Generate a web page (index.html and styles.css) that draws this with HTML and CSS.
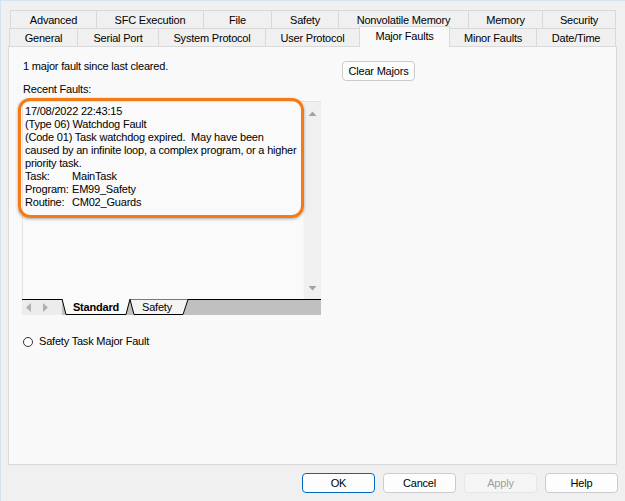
FILE: index.html
```html
<!DOCTYPE html>
<html>
<head>
<meta charset="utf-8">
<link rel="stylesheet" href="styles.css">
</head>
<body>
<div class="window">
  <div class="tabs">
    <div class="tabrow row1">
      <div class="tab w86">Advanced</div>
      <div class="tab w107">SFC Execution</div>
      <div class="tab w68">File</div>
      <div class="tab w67">Safety</div>
      <div class="tab w130">Nonvolatile Memory</div>
      <div class="tab w74">Memory</div>
      <div class="tab w74 last">Security</div>
    </div>
    <div class="tabrow row2">
      <div class="tab w68">General</div>
      <div class="tab w81">Serial Port</div>
      <div class="tab w107">System Protocol</div>
      <div class="tab w94">User Protocol</div>
      <div class="tab w91 sel">Major Faults</div>
      <div class="tab w86">Minor Faults</div>
      <div class="tab w80 last">Date/Time</div>
    </div>
  </div>
  <div class="panel">
    <div class="leftcol">
      <div class="line">1 major fault since last cleared.</div>
      <div class="line recent">Recent Faults:</div>
      <div class="faultbox">
        <div class="faulttext">
          <div class="fl">17/08/2022 22:43:15</div>
          <div class="fl">(Type 06) Watchdog Fault</div>
          <div class="fl">(Code 01) Task watchdog expired.  May have been</div>
          <div class="fl">caused by an infinite loop, a complex program, or a higher</div>
          <div class="fl">priority task.</div>
          <div class="fl"><span class="lbl">Task:</span>MainTask</div>
          <div class="fl"><span class="lbl">Program:</span>EM99_Safety</div>
          <div class="fl"><span class="lbl">Routine:</span>CM02_Guards</div>
        </div>
        <div class="vscroll">
          <svg width="17" height="14" viewBox="0 0 17 14"><path d="M4.5 10 L8.5 5.5 L12.5 10 Z" fill="#a3a3a3"/></svg>
          <svg width="17" height="14" viewBox="0 0 17 14"><path d="M4.5 4 L8.5 8.5 L12.5 4 Z" fill="#a3a3a3"/></svg>
        </div>
        <div class="highlight"></div>
      </div>
      <svg class="sheettabs" width="299" height="16" viewBox="0 0 299 16">
        <rect x="0" y="0" width="299" height="16" fill="#c0c0c0"/>
        <rect x="0" y="0" width="40" height="16" fill="#ececec"/>
        <line x1="0" y1="0.5" x2="299" y2="0.5" stroke="#000"/>
        <path d="M4 8.5 L9 4 L9 13 Z" fill="#b0b0b0"/>
        <path d="M21 4 L26 8.5 L21 13 Z" fill="#b0b0b0"/>
        <path d="M108 0.5 L112 15.5 L161 15.5 L166 0.5" fill="#f4f4f4" stroke="#000"/>
        <path d="M40 0 L44 15.5 L104 15.5 L108 0 Z" fill="#fafafa"/>
        <path d="M40 0 L44 15.5 L104 15.5 L108 0" fill="none" stroke="#000"/>
        <text x="74" y="12" text-anchor="middle" class="stab bold">Standard</text>
        <text x="135" y="12" text-anchor="middle" class="stab">Safety</text>
      </svg>
      <div class="radio"><span class="circle"></span><span>Safety Task Major Fault</span></div>
    </div>
    <div class="rightcol">
      <button class="btn clear">Clear Majors</button>
    </div>
  </div>
  <div class="buttons">
    <button class="btn dlg ok">OK</button>
    <button class="btn dlg">Cancel</button>
    <button class="btn dlg disabled">Apply</button>
    <button class="btn dlg">Help</button>
  </div>
</div>
</body>
</html>
```
FILE: styles.css
```css
html, body {
  margin: 0;
  padding: 0;
}
body {
  background: #f0f0f0;
  font-family: "Liberation Sans", Arial, sans-serif;
  font-size: 11px;
  letter-spacing: -0.2px;
  color: #000;
}
.window {
  width: 625px;
  height: 501px;
  box-sizing: border-box;
  box-shadow: inset 1px 1px 0 #d4e2f4;
  padding-top: 10px;
  overflow: hidden;
}
.tabrow {
  display: flex;
  height: 18px;
  align-items: flex-start;
}
.row1 { padding-left: 10px; }
.row2 { padding-left: 9px; }
.tab {
  box-sizing: border-box;
  height: 18px;
  border: 1px solid #d9d9d9;
  border-bottom: none;
  border-right: none;
  background: #f0f0f0;
  display: flex;
  align-items: center;
  justify-content: center;
  white-space: nowrap;
  line-height: 13px;
  padding-top: 1px;
}
.tab.last { border-right: 1px solid #d9d9d9; }
.tab.sel {
  height: 21px;
  margin-top: -2px;
  margin-bottom: -1px;
  background: #f9f9f9;
  border-right: 1px solid #d9d9d9;
  position: relative;
  z-index: 1;
  padding-top: 0;
  padding-bottom: 2px;
}
.tab.sel + .tab { border-left: none; }
.w67 { width: 67px; }
.w68 { width: 68px; }
.w74 { width: 74px; }
.w80 { width: 80px; }
.w81 { width: 81px; }
.w86 { width: 86px; }
.w91 { width: 91px; }
.w94 { width: 94px; }
.w107 { width: 107px; }
.w130 { width: 130px; }

.panel {
  box-sizing: border-box;
  margin: 0 8px 0 8px;
  height: 419px;
  border: 1px solid #d9d9d9;
  background: #f9f9f9;
  display: flex;
  align-items: flex-start;
  padding: 13px 0 0 14px;
}
.leftcol {
  display: flex;
  flex-direction: column;
  width: 298px;
}
.line {
  line-height: 13px;
  height: 13px;
  white-space: nowrap;
}
.recent { margin-top: 10px; }
.faultbox {
  position: relative;
  box-sizing: border-box;
  width: 299px;
  height: 198px;
  margin: 5px 0 0 -1px;
  border-left: 1px solid #e2e2e2;
  border-top: 1px solid #e2e2e2;
  background: #fafafa;
  display: flex;
}
.faulttext {
  flex: 1;
  padding: 3px 0 0 2px;
}
.fl {
  line-height: 13px;
  height: 13px;
  white-space: pre;
}
.lbl {
  display: inline-block;
  width: 47px;
}
.vscroll {
  width: 17px;
  background: #f0f0f0;
  border-left: 1px solid #f7f7f7;
  display: flex;
  flex-direction: column;
  justify-content: space-between;
  padding: 4px 0 3px 0;
}
.vscroll svg { display: block; }
.highlight {
  position: absolute;
  left: -5px;
  top: -4px;
  width: 286px;
  height: 120px;
  box-sizing: border-box;
  border: 3px solid #f57a14;
  border-radius: 12px;
  box-shadow: 0 1px 3px rgba(0,0,0,0.35);
  pointer-events: none;
}
.sheettabs {
  display: block;
  margin-left: -1px;
}
.stab {
  font-family: "Liberation Sans", Arial, sans-serif;
  font-size: 11px;
  fill: #000;
}
.stab.bold { font-weight: bold; }
.radio {
  margin-top: 20px;
  display: flex;
  align-items: center;
  line-height: 13px;
  height: 13px;
}
.circle {
  box-sizing: border-box;
  width: 10px;
  height: 10px;
  border: 1px solid #333;
  border-radius: 50%;
  background: #fff;
  margin-right: 6px;
}
.rightcol {
  padding-left: 21px;
  padding-top: 1px;
}
.btn {
  box-sizing: border-box;
  font-family: "Liberation Sans", Arial, sans-serif;
  font-size: 11px;
  letter-spacing: -0.2px;
  color: #000;
  background: #fdfdfd;
  border: 1px solid #cccccc;
  border-radius: 4px;
  height: 20px;
  padding: 0;
  margin: 0;
  line-height: 18px;
}
.clear { width: 73px; }
.buttons {
  display: flex;
  justify-content: flex-end;
  gap: 8px;
  padding-right: 7px;
  margin-top: 8px;
}
.dlg { width: 73px; }
.ok { border-color: #0067c0; }
.disabled {
  color: #a0a0a0;
  background: #f5f5f5;
  border-color: #e6e6e6;
}
```
